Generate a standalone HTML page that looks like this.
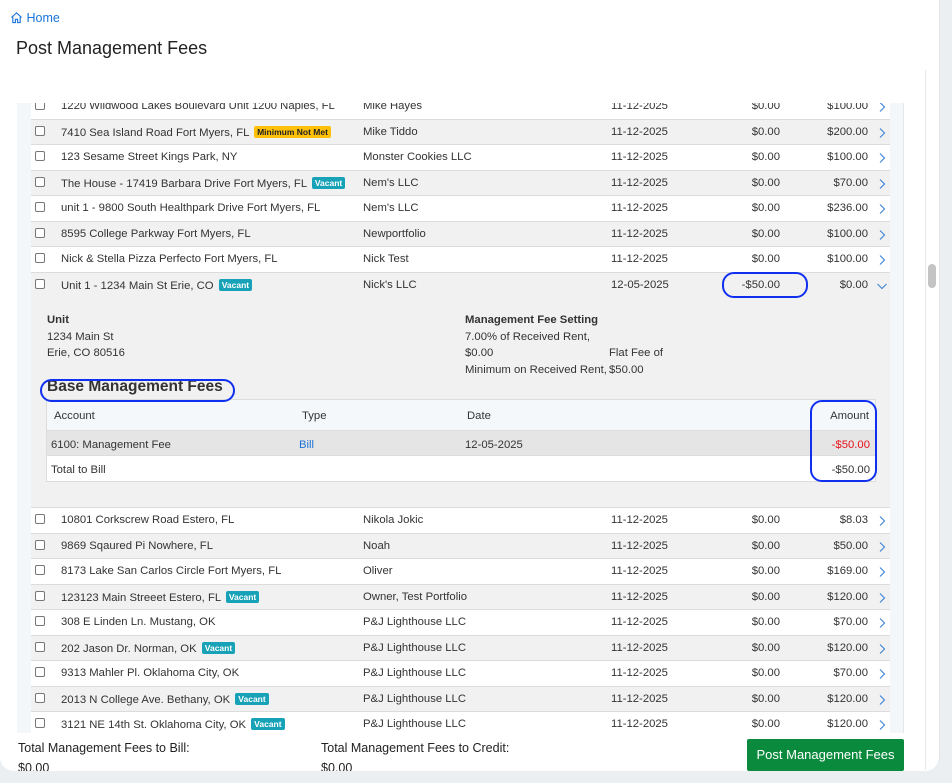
<!DOCTYPE html>
<html><head><style>
*{margin:0;padding:0;box-sizing:border-box}
body{width:952px;height:783px;overflow:hidden;background:#eceff2;font-family:"Liberation Sans",Arial,sans-serif;font-size:11.3px;color:#333;position:relative}
.card{position:absolute;left:0;top:0;width:940px;height:771px;background:#fff;border-radius:0 0 14px 14px;border-right:1px solid #e2e5e8;overflow:hidden}
.home{position:absolute;left:10px;top:11px;color:#1a73d9;font-size:12.5px}
.home svg{vertical-align:-2px}
h1{position:absolute;left:16px;top:38px;font-size:18px;font-weight:normal;color:#222}
.wrap{position:absolute;left:17px;top:103px;width:887px;height:630px;background:#f4f7fa;overflow:hidden;border-right:1px solid #e4e7ea}
.tbl{position:absolute;left:14px;top:-9px;width:859px}
.r{position:relative;height:25.5px;border-bottom:1px solid #dcdcdc;background:#fff}
.r.g{background:#f1f1f1}
.r span{position:absolute;top:6px;white-space:nowrap}
.cb{position:absolute;left:4px;top:6px;width:10px;height:10px;border:1px solid #777;border-radius:2px;background:#fff}
.a{left:30px}.o{left:332px}.d{left:580px}.f1{right:110px}.f2{right:22px}
.ch{position:absolute;right:4px;top:7px}
.b{display:inline-block;font-size:8.5px;font-weight:bold;color:#fff;background:#17a2b8;padding:1px 3px;border-radius:2px;margin-left:2px;vertical-align:1px}
.b.y{background:#ffc107;color:#222}
.det{position:relative;height:210px;background:#f1f1f1;border-bottom:1px solid #dcdcdc}
.det div{position:absolute;line-height:16.5px}
.it{position:absolute;left:15px;top:101px;width:830px;border:1px solid #ddd;background:#fff}
.it .h{height:31px;background:#f5f8fb;border-bottom:1px solid #ddd;position:relative}
.it .x{height:25px;position:relative;border-bottom:1px solid #ddd}
.it span{position:absolute;top:8px}
.it .x span{top:6px}
.oval{position:absolute;border:2px solid #1030f0;border-radius:12px}
.foot{position:absolute;top:741px;font-size:12.5px;color:#222}
.btn{position:absolute;left:747px;top:739px;width:157px;height:32px;background:#0a8a3c;color:#fff;font-size:13px;text-align:center;line-height:32px;border-radius:2px}
.sb{position:absolute;left:925px;top:70px;width:1px;height:700px;background:#e6e8ea}
.thumb{position:absolute;left:928px;top:264px;width:8px;height:24px;border-radius:4px;background:#c4c4c4}
</style></head><body>
<svg width="0" height="0" style="position:absolute"><defs><symbol id="cv" viewBox="0 0 8 12"><path d="M2 1.5 L6.5 6 L2 10.5" fill="none" stroke="#3b82d6" stroke-width="1.1"/></symbol><symbol id="cd" viewBox="0 0 12 8"><path d="M1.5 2 L6 6.5 L10.5 2" fill="none" stroke="#3b82d6" stroke-width="1.1"/></symbol></defs></svg>
<div class="card">
<div class="home"><svg width="13" height="13" viewBox="0 0 14 14"><path d="M1.5 7 L7 2 L12.5 7 M3 5.8 V12.5 H5.8 V9 H8.2 V12.5 H11 V5.8" fill="none" stroke="#1a73d9" stroke-width="1.2"/></svg> Home</div>
<h1>Post Management Fees</h1>
<div class="wrap"><div class="tbl">
<div class="r"><i class="cb"></i><span class="a">1220 Wildwood Lakes Boulevard Unit 1200 Naples, FL</span><span class="o">Mike Hayes</span><span class="d">11-12-2025</span><span class="f1">$0.00</span><span class="f2">$100.00</span><svg class="ch" width="8" height="12"><use href="#cv"/></svg></div>
<div class="r g"><i class="cb"></i><span class="a">7410 Sea Island Road Fort Myers, FL <b class="b y">Minimum Not Met</b></span><span class="o">Mike Tiddo</span><span class="d">11-12-2025</span><span class="f1">$0.00</span><span class="f2">$200.00</span><svg class="ch" width="8" height="12"><use href="#cv"/></svg></div>
<div class="r"><i class="cb"></i><span class="a">123 Sesame Street Kings Park, NY</span><span class="o">Monster Cookies LLC</span><span class="d">11-12-2025</span><span class="f1">$0.00</span><span class="f2">$100.00</span><svg class="ch" width="8" height="12"><use href="#cv"/></svg></div>
<div class="r g"><i class="cb"></i><span class="a">The House - 17419 Barbara Drive Fort Myers, FL <b class="b">Vacant</b></span><span class="o">Nem's LLC</span><span class="d">11-12-2025</span><span class="f1">$0.00</span><span class="f2">$70.00</span><svg class="ch" width="8" height="12"><use href="#cv"/></svg></div>
<div class="r"><i class="cb"></i><span class="a">unit 1 - 9800 South Healthpark Drive Fort Myers, FL</span><span class="o">Nem's LLC</span><span class="d">11-12-2025</span><span class="f1">$0.00</span><span class="f2">$236.00</span><svg class="ch" width="8" height="12"><use href="#cv"/></svg></div>
<div class="r g"><i class="cb"></i><span class="a">8595 College Parkway Fort Myers, FL</span><span class="o">Newportfolio</span><span class="d">11-12-2025</span><span class="f1">$0.00</span><span class="f2">$100.00</span><svg class="ch" width="8" height="12"><use href="#cv"/></svg></div>
<div class="r"><i class="cb"></i><span class="a">Nick &amp; Stella Pizza Perfecto Fort Myers, FL</span><span class="o">Nick Test</span><span class="d">11-12-2025</span><span class="f1">$0.00</span><span class="f2">$100.00</span><svg class="ch" width="8" height="12"><use href="#cv"/></svg></div>
<div class="r g" style="border-bottom:none"><i class="cb"></i><span class="a">Unit 1 - 1234 Main St Erie, CO <b class="b">Vacant</b></span><span class="o">Nick's LLC</span><span class="d">12-05-2025</span><span class="f1">-$50.00</span><span class="f2">$0.00</span><svg class="ch" width="12" height="8" style="right:2px;top:9px"><use href="#cd"/></svg></div>
<div class="det">
<div style="left:16px;top:14px"><b>Unit</b><br>1234 Main St<br>Erie, CO 80516</div>
<div style="left:434px;top:14px"><b>Management Fee Setting</b><br>7.00% of Received Rent,<br>$0.00<br>Minimum on Received Rent,</div>
<div style="left:578px;top:47px">Flat Fee of<br>$50.00</div>
<div style="left:16px;top:81px;font-size:15.5px;font-weight:bold;color:#333">Base Management Fees</div>
<div class="it">
<div class="h"><span style="left:7px">Account</span><span style="left:255px">Type</span><span style="left:420px">Date</span><span style="right:6px">Amount</span></div>
<div class="x" style="background:#e5e5e5"><span style="left:4px">6100: Management Fee</span><span style="left:252px;color:#1a73d9">Bill</span><span style="left:418px">12-05-2025</span><span style="right:5px;color:#e8101a">-$50.00</span></div>
<div class="x" style="border-bottom:none"><span style="left:4px">Total to Bill</span><span style="right:5px">-$50.00</span></div>
</div>
</div>
<div class="r"><i class="cb"></i><span class="a">10801 Corkscrew Road Estero, FL</span><span class="o">Nikola Jokic</span><span class="d">11-12-2025</span><span class="f1">$0.00</span><span class="f2">$8.03</span><svg class="ch" width="8" height="12"><use href="#cv"/></svg></div>
<div class="r g"><i class="cb"></i><span class="a">9869 Sqaured Pi Nowhere, FL</span><span class="o">Noah</span><span class="d">11-12-2025</span><span class="f1">$0.00</span><span class="f2">$50.00</span><svg class="ch" width="8" height="12"><use href="#cv"/></svg></div>
<div class="r"><i class="cb"></i><span class="a">8173 Lake San Carlos Circle Fort Myers, FL</span><span class="o">Oliver</span><span class="d">11-12-2025</span><span class="f1">$0.00</span><span class="f2">$169.00</span><svg class="ch" width="8" height="12"><use href="#cv"/></svg></div>
<div class="r g"><i class="cb"></i><span class="a">123123 Main Streeet Estero, FL <b class="b">Vacant</b></span><span class="o">Owner, Test Portfolio</span><span class="d">11-12-2025</span><span class="f1">$0.00</span><span class="f2">$120.00</span><svg class="ch" width="8" height="12"><use href="#cv"/></svg></div>
<div class="r"><i class="cb"></i><span class="a">308 E Linden Ln. Mustang, OK</span><span class="o">P&amp;J Lighthouse LLC</span><span class="d">11-12-2025</span><span class="f1">$0.00</span><span class="f2">$70.00</span><svg class="ch" width="8" height="12"><use href="#cv"/></svg></div>
<div class="r g"><i class="cb"></i><span class="a">202 Jason Dr. Norman, OK <b class="b">Vacant</b></span><span class="o">P&amp;J Lighthouse LLC</span><span class="d">11-12-2025</span><span class="f1">$0.00</span><span class="f2">$120.00</span><svg class="ch" width="8" height="12"><use href="#cv"/></svg></div>
<div class="r"><i class="cb"></i><span class="a">9313 Mahler Pl. Oklahoma City, OK</span><span class="o">P&amp;J Lighthouse LLC</span><span class="d">11-12-2025</span><span class="f1">$0.00</span><span class="f2">$70.00</span><svg class="ch" width="8" height="12"><use href="#cv"/></svg></div>
<div class="r g"><i class="cb"></i><span class="a">2013 N College Ave. Bethany, OK <b class="b">Vacant</b></span><span class="o">P&amp;J Lighthouse LLC</span><span class="d">11-12-2025</span><span class="f1">$0.00</span><span class="f2">$120.00</span><svg class="ch" width="8" height="12"><use href="#cv"/></svg></div>
<div class="r"><i class="cb"></i><span class="a">3121 NE 14th St. Oklahoma City, OK <b class="b">Vacant</b></span><span class="o">P&amp;J Lighthouse LLC</span><span class="d">11-12-2025</span><span class="f1">$0.00</span><span class="f2">$120.00</span><svg class="ch" width="8" height="12"><use href="#cv"/></svg></div>
</div></div>
<div class="oval" style="left:722px;top:272px;width:86px;height:26px"></div>
<div class="oval" style="left:40px;top:379px;width:195px;height:23px"></div>
<div class="oval" style="left:810px;top:400px;width:67px;height:82px"></div>
<div class="sb"></div><div class="thumb"></div>
<div class="foot" style="left:18px">Total Management Fees to Bill:<br><span style="line-height:26px">$0.00</span></div>
<div class="foot" style="left:321px">Total Management Fees to Credit:<br><span style="line-height:26px">$0.00</span></div>
<div class="btn">Post Management Fees</div>
</div>
</body></html>
